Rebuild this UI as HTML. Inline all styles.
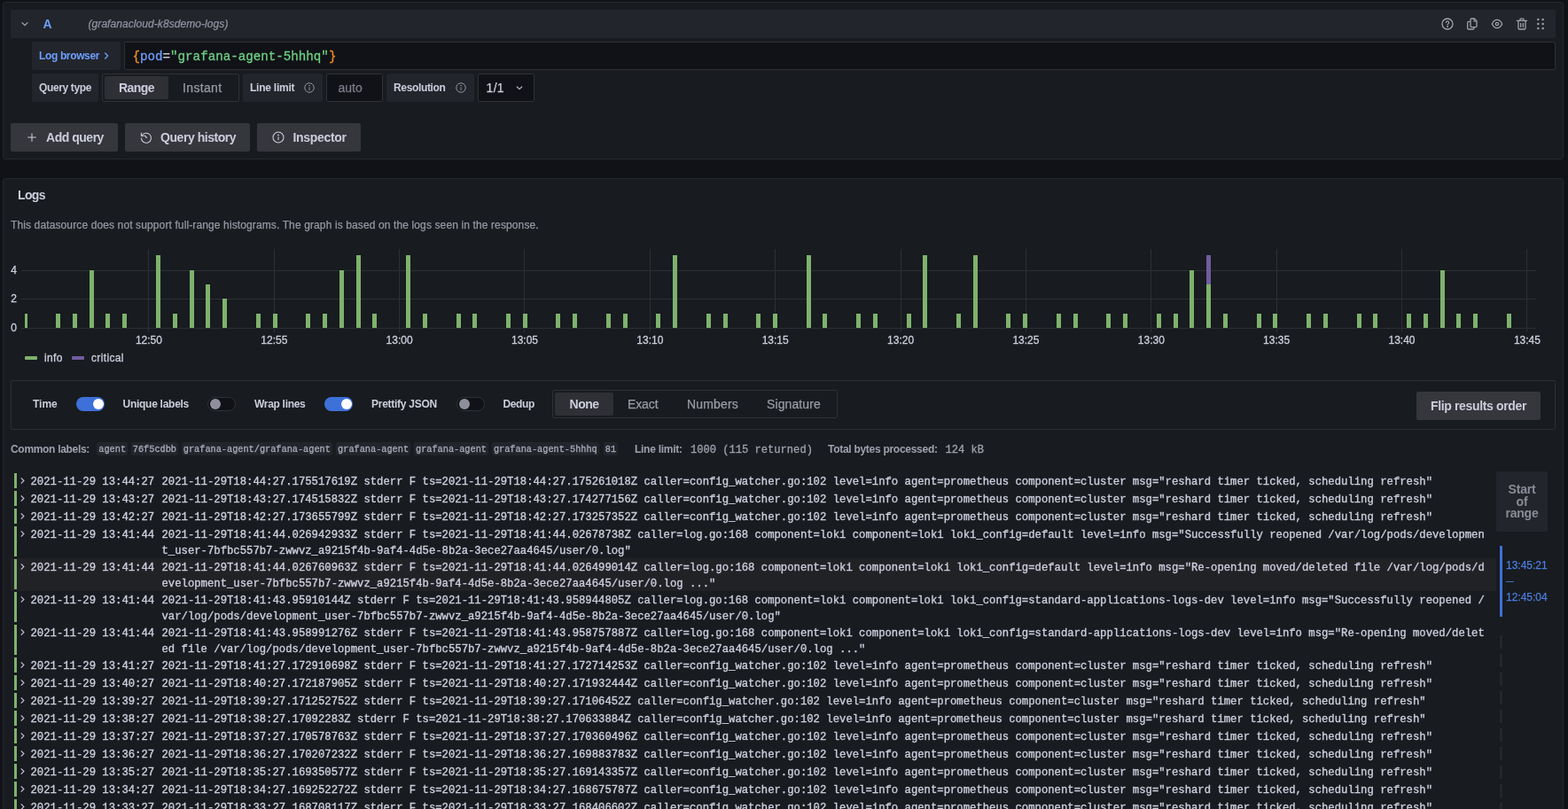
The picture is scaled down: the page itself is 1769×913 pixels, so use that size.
<!DOCTYPE html>
<html lang="en">
<head>
<meta charset="utf-8">
<title>Explore - Loki logs</title>
<style>
*{box-sizing:border-box;margin:0;padding:0}
html,body{width:1769px;height:913px;overflow:hidden;background:#111217}
body{position:relative;font-family:"Liberation Sans","DejaVu Sans",sans-serif;color:#ccccdc;font-size:14px}
.abs{position:absolute}
.panel{position:absolute;background:#181b1f;border:1px solid #25272c;border-radius:3px}
.sec{background:#22252b;border-radius:2px}
.lbl{position:absolute;height:32px;line-height:32px;background:#22252b;border-radius:2px;font-size:12px;font-weight:bold;padding-left:8px;white-space:nowrap;color:#ccccdc}
.inp{position:absolute;height:32px;background:#111217;border:1px solid #2f3137;border-radius:2px;line-height:30px;font-size:14px;white-space:nowrap}
.rg{background:#181b1f}
.btn{position:absolute;height:32px;line-height:32px;background:#35373d;border-radius:2px;font-size:14px;font-weight:bold;color:#ccccdc;white-space:nowrap}
.t{position:absolute;white-space:nowrap}
.rs{-webkit-text-stroke:0.25px}
.mono{-webkit-text-stroke:0.3px}
.mono{font-family:"Liberation Mono","DejaVu Sans Mono",monospace}
.sw{position:absolute;width:32px;height:16px;border-radius:8px;top:448px}
.sw.on{background:#3d71d9}
.sw.on i{position:absolute;right:1.500px;top:2px;width:12px;height:12px;border-radius:50%;background:#fff}
.sw.off{background:#111217;border:1px solid #2f3137}
.sw.off i{position:absolute;left:1.500px;top:1px;width:12px;height:12px;border-radius:50%;background:#8e8f9b}
.o12{position:absolute;top:449px;line-height:14px;font-size:12px;font-weight:bold;white-space:nowrap}
.ro{position:absolute;font-size:14px;white-space:nowrap;color:#9a9ba6;-webkit-text-stroke:0.25px}
.cl{position:absolute;top:499px;height:15px;line-height:15px;padding-top:1px !important;background:#22252b;border-radius:2px;font-size:10.25px;padding:0 2.3px;white-space:pre;color:#a9aab8}
.m12{position:absolute;top:498.500px;line-height:16px;font-size:12px;white-space:nowrap}
.chart text{font-family:"Liberation Sans","DejaVu Sans",sans-serif;font-size:12px;fill:#ccccdc;stroke:#ccccdc;stroke-width:.3px}
.row{position:absolute;left:12px;width:1676px;font-family:"Liberation Mono","DejaVu Sans Mono",monospace;font-size:12.25px;line-height:18px;white-space:pre;color:#ccccdc;-webkit-text-stroke:0.35px #ccccdc}
.row.hov{background:#202226}
.row .lv{position:absolute;left:4px;top:1px;width:3px;background:#7eb26d}
.row .chev{position:absolute;left:10px;top:4.500px;width:7px;height:9px}
.row .tm{position:absolute;left:22.500px;top:1.750px}
.row .msg{position:absolute;left:170.500px;top:1.750px}
</style>
</head>
<body>
<div id="root" style="position:absolute;left:0;top:0;width:1769px;height:913px;will-change:transform">

<!-- ================= Query editor panel ================= -->
<div class="panel" style="left:3px;top:2px;width:1761px;height:178px"></div>

<div class="abs sec" style="left:12px;top:11px;width:1743px;height:32px"></div>
<svg class="abs" style="left:20px;top:19px" width="16" height="16" viewBox="0 0 24 24"><path d="M7.500 10 L12 14.500 L16.500 10" fill="none" stroke="#a8a9b7" stroke-width="1.800" stroke-linecap="round" stroke-linejoin="round"/></svg>
<div class="t" style="left:48.5px;top:11px;line-height:32px;font-size:14px;font-weight:bold;color:#6e9fff;letter-spacing:-0.23px">A</div>
<div class="t rs" style="left:99.5px;top:11px;line-height:32px;font-size:12px;font-style:italic;color:#9192a0;letter-spacing:0.07px">(grafanacloud-k8sdemo-logs)</div>

<!-- header action icons -->
<svg class="abs" style="left:1625px;top:19px" width="16" height="16" viewBox="0 0 24 24" fill="none" stroke="#a2a3b1" stroke-width="1.9"><circle cx="12" cy="12" r="9"/><path d="M9.700 9.700a2.400 2.400 0 1 1 3.300 2.200c-.7.300-1 .800-1 1.500" stroke-width="1.700" stroke-linecap="round"/><circle cx="12" cy="16.600" r="0.500" fill="#a2a3b1"/></svg>
<svg class="abs" style="left:1653px;top:19px" width="16" height="16" viewBox="0 0 24 24" fill="none" stroke="#a2a3b1" stroke-width="1.9" stroke-linejoin="round"><path d="M11 3h4.500l4 4v8.500a2 2 0 0 1-2 2H11a2 2 0 0 1-2-2V5a2 2 0 0 1 2-2z"/><path d="M15 3.300V7.500h4.300" stroke-width="1.600"/><path d="M8.500 8H6a2 2 0 0 0-2 2v9a2 2 0 0 0 2 2h7a2 2 0 0 0 2-2v-1"/></svg>
<svg class="abs" style="left:1681px;top:19px" width="16" height="16" viewBox="0 0 24 24" fill="none" stroke="#a2a3b1" stroke-width="1.9"><path d="M3.500 12c2-4.600 5-6.900 8.500-6.900s6.500 2.300 8.500 6.900c-2 4.600-5 6.900-8.500 6.900s-6.500-2.300-8.500-6.900z"/><circle cx="12" cy="12" r="2.600"/></svg>
<svg class="abs" style="left:1709px;top:19px" width="16" height="16" viewBox="0 0 24 24" fill="none" stroke="#a2a3b1" stroke-width="1.9" stroke-linecap="round"><path d="M3.500 6.500h17M9 6V4.200a1 1 0 0 1 1-1h4a1 1 0 0 1 1 1V6M6 7v12a2 2 0 0 0 2 2h8a2 2 0 0 0 2-2V7M10 11v6M14 11v6"/></svg>
<svg class="abs" style="left:1730px;top:19px" width="16" height="16" viewBox="0 0 24 24" fill="#a2a3b1"><circle cx="8" cy="4.500" r="1.800"/><circle cx="16" cy="4.500" r="1.800"/><circle cx="8" cy="12" r="1.800"/><circle cx="16" cy="12" r="1.800"/><circle cx="8" cy="19.500" r="1.800"/><circle cx="16" cy="19.500" r="1.800"/></svg>

<!-- row 2 : log browser + query -->
<div class="abs sec" style="left:36px;top:47px;width:100px;height:32px"></div>
<div class="t" style="left:44px;top:47px;line-height:32px;font-size:12px;font-weight:bold;color:#6e9fff;letter-spacing:-0.36px">Log browser</div>
<svg class="abs" style="left:112px;top:55px" width="16" height="16" viewBox="0 0 24 24"><path d="M10 7.500 L14.500 12 L10 16.500" fill="none" stroke="#6e9fff" stroke-width="2" stroke-linecap="round" stroke-linejoin="round"/></svg>
<div class="inp" style="left:140px;top:47px;width:1615px"></div>
<div class="t mono" style="left:149.500px;top:48px;line-height:32px;font-size:14.200px"><span style="color:#f28b20">{</span><span style="color:#6e9fff">pod</span><span style="color:#c8c9d6">=</span><span style="color:#6ed085">"grafana-agent-5hhhq"</span><span style="color:#f28b20">}</span></div>

<!-- row 3 : options -->
<div class="lbl" style="left:36px;top:83px;width:75px;letter-spacing:-0.37px">Query type</div>
<div class="inp rg" style="left:115px;top:83px;width:155px"></div>
<div class="abs" style="left:118px;top:86px;width:72px;height:26px;background:#2e3036;border-radius:2px"></div>
<div class="t" style="left:134px;top:83px;line-height:32px;font-size:14px;font-weight:bold;color:#ccccdc;letter-spacing:-0.56px">Range</div>
<div class="t rs" style="left:206px;top:83px;line-height:32px;font-size:14px;color:#9a9ba6;letter-spacing:0.35px">Instant</div>
<div class="lbl" style="left:274px;top:83px;width:90px;letter-spacing:-0.24px">Line limit</div>
<svg class="abs" style="left:342px;top:92px" width="14" height="14" viewBox="0 0 24 24" fill="none" stroke="#9192a0" stroke-width="1.700"><circle cx="12" cy="12" r="9"/><path d="M12 11.500v5" stroke-linecap="round"/><circle cx="12" cy="8" r="0.600" fill="#9192a0"/></svg>
<div class="inp" style="left:368px;top:83px;width:64px"></div>
<div class="t rs" style="left:381.500px;top:83px;line-height:32px;font-size:14px;color:#7b7c88">auto</div>
<div class="lbl" style="left:436px;top:83px;width:99px;letter-spacing:-0.34px">Resolution</div>
<svg class="abs" style="left:513px;top:92px" width="14" height="14" viewBox="0 0 24 24" fill="none" stroke="#9192a0" stroke-width="1.700"><circle cx="12" cy="12" r="9"/><path d="M12 11.500v5" stroke-linecap="round"/><circle cx="12" cy="8" r="0.600" fill="#9192a0"/></svg>
<div class="inp" style="left:539px;top:83px;width:64px"></div>
<div class="t rs" style="left:548.500px;top:83px;line-height:32px;font-size:14px;color:#ccccdc;letter-spacing:0.34px">1/1</div>
<svg class="abs" style="left:578px;top:91px" width="16" height="16" viewBox="0 0 24 24"><path d="M8 10.500 L12 14.500 L16 10.500" fill="none" stroke="#b4b5c3" stroke-width="1.800" stroke-linecap="round" stroke-linejoin="round"/></svg>

<!-- buttons -->
<div class="btn" style="left:12px;top:139px;width:121px"></div>
<svg class="abs" style="left:28px;top:147px" width="16" height="16" viewBox="0 0 24 24"><path d="M12 5.500v13M5.500 12h13" fill="none" stroke="#ccccdc" stroke-width="1.600" stroke-linecap="round"/></svg>
<div class="t" style="left:52px;top:139px;line-height:32px;font-size:14px;font-weight:bold;letter-spacing:-0.48px">Add query</div>
<div class="btn" style="left:141px;top:139px;width:141px"></div>
<svg class="abs" style="left:157px;top:147px" width="16" height="16" viewBox="0 0 24 24" fill="none" stroke="#ccccdc" stroke-width="1.600" stroke-linecap="round" stroke-linejoin="round"><path d="M4.600 9.300A8.300 8.300 0 1 1 3.700 13"/><path d="M3.600 4.600v4.800h4.800"/><path d="M12.300 12.300L9.800 9.300" stroke-width="1.800"/><circle cx="12.300" cy="12.300" r="1" fill="#ccccdc" stroke="none"/></svg>
<div class="t" style="left:181px;top:139px;line-height:32px;font-size:14px;font-weight:bold;letter-spacing:-0.45px">Query history</div>
<div class="btn" style="left:290px;top:139px;width:117px"></div>
<svg class="abs" style="left:306px;top:147px" width="16" height="16" viewBox="0 0 24 24" fill="none" stroke="#ccccdc" stroke-width="1.600"><circle cx="12" cy="12" r="9"/><path d="M12 11.500v4.500" stroke-linecap="round"/><circle cx="12" cy="8.200" r="0.500" fill="#ccccdc"/></svg>
<div class="t" style="left:330.500px;top:139px;line-height:32px;font-size:14px;font-weight:bold;letter-spacing:-0.31px">Inspector</div>

<!-- ================= Logs panel ================= -->
<div class="panel" style="left:3px;top:201px;width:1761px;height:740px"></div>
<div class="t" style="left:20px;top:210px;line-height:20px;font-size:14px;font-weight:bold;letter-spacing:-0.66px">Logs</div>
<div class="t rs" style="left:12px;top:245px;line-height:18px;font-size:12px;color:#9697a3;letter-spacing:0.12px">This datasource does not support full-range histograms. The graph is based on the logs seen in the response.</div>

<svg class="chart" width="1769" height="420" viewBox="0 0 1769 420" style="position:absolute;left:0;top:0">
<g shape-rendering="crispEdges"><rect x="167" y="281" width="1" height="94" fill="#2c2f34"/><rect x="309" y="281" width="1" height="94" fill="#2c2f34"/><rect x="450" y="281" width="1" height="94" fill="#2c2f34"/><rect x="591" y="281" width="1" height="94" fill="#2c2f34"/><rect x="733" y="281" width="1" height="94" fill="#2c2f34"/><rect x="874" y="281" width="1" height="94" fill="#2c2f34"/><rect x="1016" y="281" width="1" height="94" fill="#2c2f34"/><rect x="1157" y="281" width="1" height="94" fill="#2c2f34"/><rect x="1298" y="281" width="1" height="94" fill="#2c2f34"/><rect x="1440" y="281" width="1" height="94" fill="#2c2f34"/><rect x="1581" y="281" width="1" height="94" fill="#2c2f34"/><rect x="1722" y="281" width="1" height="94" fill="#2c2f34"/><rect x="24" y="370" width="1709" height="1" fill="#2c2f34"/><rect x="24" y="337" width="1709" height="1" fill="#2c2f34"/><rect x="24" y="305" width="1709" height="1" fill="#2c2f34"/><rect x="28" y="354" width="3" height="16" fill="#7eb26d"/><rect x="63" y="354" width="5" height="16" fill="#7eb26d"/><rect x="82" y="354" width="5" height="16" fill="#7eb26d"/><rect x="101" y="305" width="5" height="65" fill="#7eb26d"/><rect x="119" y="354" width="5" height="16" fill="#7eb26d"/><rect x="138" y="354" width="5" height="16" fill="#7eb26d"/><rect x="176" y="288" width="5" height="82" fill="#7eb26d"/><rect x="195" y="354" width="5" height="16" fill="#7eb26d"/><rect x="214" y="305" width="5" height="65" fill="#7eb26d"/><rect x="232" y="321" width="5" height="49" fill="#7eb26d"/><rect x="251" y="337" width="5" height="33" fill="#7eb26d"/><rect x="289" y="354" width="5" height="16" fill="#7eb26d"/><rect x="308" y="354" width="5" height="16" fill="#7eb26d"/><rect x="345" y="354" width="5" height="16" fill="#7eb26d"/><rect x="364" y="354" width="5" height="16" fill="#7eb26d"/><rect x="383" y="305" width="5" height="65" fill="#7eb26d"/><rect x="402" y="288" width="5" height="82" fill="#7eb26d"/><rect x="420" y="354" width="5" height="16" fill="#7eb26d"/><rect x="458" y="288" width="5" height="82" fill="#7eb26d"/><rect x="477" y="354" width="5" height="16" fill="#7eb26d"/><rect x="515" y="354" width="5" height="16" fill="#7eb26d"/><rect x="533" y="354" width="5" height="16" fill="#7eb26d"/><rect x="571" y="354" width="5" height="16" fill="#7eb26d"/><rect x="590" y="354" width="5" height="16" fill="#7eb26d"/><rect x="627" y="354" width="5" height="16" fill="#7eb26d"/><rect x="646" y="354" width="5" height="16" fill="#7eb26d"/><rect x="684" y="354" width="5" height="16" fill="#7eb26d"/><rect x="703" y="354" width="5" height="16" fill="#7eb26d"/><rect x="740" y="354" width="5" height="16" fill="#7eb26d"/><rect x="759" y="288" width="5" height="82" fill="#7eb26d"/><rect x="797" y="354" width="5" height="16" fill="#7eb26d"/><rect x="816" y="354" width="5" height="16" fill="#7eb26d"/><rect x="853" y="354" width="5" height="16" fill="#7eb26d"/><rect x="872" y="354" width="5" height="16" fill="#7eb26d"/><rect x="910" y="288" width="5" height="82" fill="#7eb26d"/><rect x="928" y="354" width="5" height="16" fill="#7eb26d"/><rect x="966" y="354" width="5" height="16" fill="#7eb26d"/><rect x="985" y="354" width="5" height="16" fill="#7eb26d"/><rect x="1023" y="354" width="5" height="16" fill="#7eb26d"/><rect x="1041" y="288" width="5" height="82" fill="#7eb26d"/><rect x="1079" y="354" width="5" height="16" fill="#7eb26d"/><rect x="1098" y="288" width="5" height="82" fill="#7eb26d"/><rect x="1135" y="354" width="5" height="16" fill="#7eb26d"/><rect x="1154" y="354" width="5" height="16" fill="#7eb26d"/><rect x="1192" y="354" width="5" height="16" fill="#7eb26d"/><rect x="1211" y="354" width="5" height="16" fill="#7eb26d"/><rect x="1248" y="354" width="5" height="16" fill="#7eb26d"/><rect x="1267" y="354" width="5" height="16" fill="#7eb26d"/><rect x="1305" y="354" width="5" height="16" fill="#7eb26d"/><rect x="1324" y="354" width="5" height="16" fill="#7eb26d"/><rect x="1342" y="305" width="5" height="65" fill="#7eb26d"/><rect x="1361" y="321" width="5" height="49" fill="#7eb26d"/><rect x="1361" y="288" width="5" height="33" fill="#705da0"/><rect x="1380" y="354" width="5" height="16" fill="#7eb26d"/><rect x="1418" y="354" width="5" height="16" fill="#7eb26d"/><rect x="1436" y="354" width="5" height="16" fill="#7eb26d"/><rect x="1474" y="354" width="5" height="16" fill="#7eb26d"/><rect x="1493" y="354" width="5" height="16" fill="#7eb26d"/><rect x="1531" y="354" width="5" height="16" fill="#7eb26d"/><rect x="1549" y="354" width="5" height="16" fill="#7eb26d"/><rect x="1587" y="354" width="5" height="16" fill="#7eb26d"/><rect x="1606" y="354" width="5" height="16" fill="#7eb26d"/><rect x="1625" y="305" width="5" height="65" fill="#7eb26d"/><rect x="1643" y="354" width="5" height="16" fill="#7eb26d"/><rect x="1662" y="354" width="5" height="16" fill="#7eb26d"/><rect x="1700" y="354" width="5" height="16" fill="#7eb26d"/></g>
<g class="axt"><text x="167.9" y="388" text-anchor="middle">12:50</text><text x="309.3" y="388" text-anchor="middle">12:55</text><text x="450.6" y="388" text-anchor="middle">13:00</text><text x="592.0" y="388" text-anchor="middle">13:05</text><text x="733.3" y="388" text-anchor="middle">13:10</text><text x="874.7" y="388" text-anchor="middle">13:15</text><text x="1016.1" y="388" text-anchor="middle">13:20</text><text x="1157.4" y="388" text-anchor="middle">13:25</text><text x="1298.8" y="388" text-anchor="middle">13:30</text><text x="1440.1" y="388" text-anchor="middle">13:35</text><text x="1581.5" y="388" text-anchor="middle">13:40</text><text x="1722.9" y="388" text-anchor="middle">13:45</text><text x="19" y="373.5" text-anchor="end">0</text><text x="19" y="340.5" text-anchor="end">2</text><text x="19" y="308.5" text-anchor="end">4</text></g>
<rect x="28" y="402" width="14" height="4" rx="1" fill="#7eb26d"/><text class="leg" x="50" y="408" letter-spacing="0.35">info</text>
<rect x="81" y="402" width="14" height="4" rx="1" fill="#705da0"/><text class="leg" x="103" y="408" letter-spacing="0.35">critical</text>
</svg>

<!-- log options box -->
<div class="abs" style="left:12px;top:429px;width:1743px;height:56px;border:1px solid #2d2f35;border-radius:2px"></div>
<div class="o12" style="left:37px;letter-spacing:-0.02px">Time</div>
<div class="sw on" style="left:86px"><i></i></div>
<div class="o12" style="left:138.500px;letter-spacing:-0.27px">Unique labels</div>
<div class="sw off" style="left:234px"><i></i></div>
<div class="o12" style="left:287px;letter-spacing:-0.30px">Wrap lines</div>
<div class="sw on" style="left:366px"><i></i></div>
<div class="o12" style="left:419px;letter-spacing:-0.26px">Prettify JSON</div>
<div class="sw off" style="left:515px"><i></i></div>
<div class="o12" style="left:567.500px;letter-spacing:-0.39px">Dedup</div>
<div class="inp rg" style="left:623px;top:440px;width:322px"></div>
<div class="abs" style="left:626px;top:443px;width:66px;height:26px;background:#2e3036;border-radius:2px"></div>
<div class="t" style="left:642.500px;top:440px;line-height:32px;font-size:14px;font-weight:bold;color:#ccccdc;letter-spacing:-0.47px">None</div>
<div class="ro" style="left:708px;top:440px;line-height:32px;letter-spacing:-0.12px">Exact</div>
<div class="ro" style="left:775px;top:440px;line-height:32px;letter-spacing:0.17px">Numbers</div>
<div class="ro" style="left:865px;top:440px;line-height:32px;letter-spacing:0.10px">Signature</div>
<div class="btn" style="left:1598px;top:442px;width:140px"></div>
<div class="t" style="left:1614px;top:442px;line-height:32px;font-size:14px;font-weight:bold;letter-spacing:-0.35px">Flip results order</div>

<!-- meta row -->
<div class="m12" style="left:12px;font-weight:bold;color:#9fa0ad;letter-spacing:-0.31px">Common labels:</div>
<div class="cl mono" style="left:109px">agent</div>
<div class="cl mono" style="left:147.500px">76f5cdbb</div>
<div class="cl mono" style="left:204.500px">grafana-agent/grafana-agent</div>
<div class="cl mono" style="left:378.800px">grafana-agent</div>
<div class="cl mono" style="left:466.700px">grafana-agent</div>
<div class="cl mono" style="left:554.600px">grafana-agent-5hhhq</div>
<div class="cl mono" style="left:680.500px">81</div>
<div class="m12" style="left:716px;font-weight:bold;color:#9fa0ad;letter-spacing:-0.27px">Line limit:</div>
<div class="m12 mono" style="top:499.500px;left:779px;color:#9fa0ad;font-size:12.100px">1000 (115 returned)</div>
<div class="m12" style="left:934px;font-weight:bold;color:#9fa0ad;letter-spacing:-0.28px">Total bytes processed:</div>
<div class="m12 mono" style="top:499.500px;left:1066.500px;color:#9fa0ad;font-size:12.100px">124 kB</div>

<!-- log rows -->
<div class="row" style="top:533px;height:20px"><i class="lv" style="height:17px"></i><svg class="chev" viewBox="0 0 8 10"><path d="M2 1.5 L5.6 5 L2 8.5" fill="none" stroke="#c4c5d3" stroke-width="1.3"/></svg><span class="tm">2021-11-29 13:44:27</span><span class="msg">2021-11-29T18:44:27.175517619Z stderr F ts=2021-11-29T18:44:27.175261018Z caller=config_watcher.go:102 level=info agent=prometheus component=cluster msg=&quot;reshard timer ticked, scheduling refresh&quot;</span></div>
<div class="row" style="top:553px;height:20px"><i class="lv" style="height:17px"></i><svg class="chev" viewBox="0 0 8 10"><path d="M2 1.5 L5.6 5 L2 8.5" fill="none" stroke="#c4c5d3" stroke-width="1.3"/></svg><span class="tm">2021-11-29 13:43:27</span><span class="msg">2021-11-29T18:43:27.174515832Z stderr F ts=2021-11-29T18:43:27.174277156Z caller=config_watcher.go:102 level=info agent=prometheus component=cluster msg=&quot;reshard timer ticked, scheduling refresh&quot;</span></div>
<div class="row" style="top:573px;height:20px"><i class="lv" style="height:17px"></i><svg class="chev" viewBox="0 0 8 10"><path d="M2 1.5 L5.6 5 L2 8.5" fill="none" stroke="#c4c5d3" stroke-width="1.3"/></svg><span class="tm">2021-11-29 13:42:27</span><span class="msg">2021-11-29T18:42:27.173655799Z stderr F ts=2021-11-29T18:42:27.173257352Z caller=config_watcher.go:102 level=info agent=prometheus component=cluster msg=&quot;reshard timer ticked, scheduling refresh&quot;</span></div>
<div class="row" style="top:593px;height:37px"><i class="lv" style="height:34px"></i><svg class="chev" viewBox="0 0 8 10"><path d="M2 1.5 L5.6 5 L2 8.5" fill="none" stroke="#c4c5d3" stroke-width="1.3"/></svg><span class="tm">2021-11-29 13:41:44</span><span class="msg">2021-11-29T18:41:44.026942933Z stderr F ts=2021-11-29T18:41:44.02678738Z caller=log.go:168 component=loki component=loki loki_config=default level=info msg=&quot;Successfully reopened /var/log/pods/developmen<br>t_user-7bfbc557b7-zwwvz_a9215f4b-9af4-4d5e-8b2a-3ece27aa4645/user/0.log&quot;</span></div>
<div class="row hov" style="top:630px;height:37px"><i class="lv" style="height:34px"></i><svg class="chev" viewBox="0 0 8 10"><path d="M2 1.5 L5.6 5 L2 8.5" fill="none" stroke="#c4c5d3" stroke-width="1.3"/></svg><span class="tm">2021-11-29 13:41:44</span><span class="msg">2021-11-29T18:41:44.026760963Z stderr F ts=2021-11-29T18:41:44.026499014Z caller=log.go:168 component=loki component=loki loki_config=default level=info msg=&quot;Re-opening moved/deleted file /var/log/pods/d<br>evelopment_user-7bfbc557b7-zwwvz_a9215f4b-9af4-4d5e-8b2a-3ece27aa4645/user/0.log ...&quot;</span></div>
<div class="row" style="top:667px;height:37px"><i class="lv" style="height:34px"></i><svg class="chev" viewBox="0 0 8 10"><path d="M2 1.5 L5.6 5 L2 8.5" fill="none" stroke="#c4c5d3" stroke-width="1.3"/></svg><span class="tm">2021-11-29 13:41:44</span><span class="msg">2021-11-29T18:41:43.95910144Z stderr F ts=2021-11-29T18:41:43.958944805Z caller=log.go:168 component=loki component=loki loki_config=standard-applications-logs-dev level=info msg=&quot;Successfully reopened /<br>var/log/pods/development_user-7bfbc557b7-zwwvz_a9215f4b-9af4-4d5e-8b2a-3ece27aa4645/user/0.log&quot;</span></div>
<div class="row" style="top:704px;height:37px"><i class="lv" style="height:34px"></i><svg class="chev" viewBox="0 0 8 10"><path d="M2 1.5 L5.6 5 L2 8.5" fill="none" stroke="#c4c5d3" stroke-width="1.3"/></svg><span class="tm">2021-11-29 13:41:44</span><span class="msg">2021-11-29T18:41:43.958991276Z stderr F ts=2021-11-29T18:41:43.958757887Z caller=log.go:168 component=loki component=loki loki_config=standard-applications-logs-dev level=info msg=&quot;Re-opening moved/delet<br>ed file /var/log/pods/development_user-7bfbc557b7-zwwvz_a9215f4b-9af4-4d5e-8b2a-3ece27aa4645/user/0.log ...&quot;</span></div>
<div class="row" style="top:741px;height:20px"><i class="lv" style="height:17px"></i><svg class="chev" viewBox="0 0 8 10"><path d="M2 1.5 L5.6 5 L2 8.5" fill="none" stroke="#c4c5d3" stroke-width="1.3"/></svg><span class="tm">2021-11-29 13:41:27</span><span class="msg">2021-11-29T18:41:27.172910698Z stderr F ts=2021-11-29T18:41:27.172714253Z caller=config_watcher.go:102 level=info agent=prometheus component=cluster msg=&quot;reshard timer ticked, scheduling refresh&quot;</span></div>
<div class="row" style="top:761px;height:20px"><i class="lv" style="height:17px"></i><svg class="chev" viewBox="0 0 8 10"><path d="M2 1.5 L5.6 5 L2 8.5" fill="none" stroke="#c4c5d3" stroke-width="1.3"/></svg><span class="tm">2021-11-29 13:40:27</span><span class="msg">2021-11-29T18:40:27.172187905Z stderr F ts=2021-11-29T18:40:27.171932444Z caller=config_watcher.go:102 level=info agent=prometheus component=cluster msg=&quot;reshard timer ticked, scheduling refresh&quot;</span></div>
<div class="row" style="top:781px;height:20px"><i class="lv" style="height:17px"></i><svg class="chev" viewBox="0 0 8 10"><path d="M2 1.5 L5.6 5 L2 8.5" fill="none" stroke="#c4c5d3" stroke-width="1.3"/></svg><span class="tm">2021-11-29 13:39:27</span><span class="msg">2021-11-29T18:39:27.171252752Z stderr F ts=2021-11-29T18:39:27.17106452Z caller=config_watcher.go:102 level=info agent=prometheus component=cluster msg=&quot;reshard timer ticked, scheduling refresh&quot;</span></div>
<div class="row" style="top:801px;height:20px"><i class="lv" style="height:17px"></i><svg class="chev" viewBox="0 0 8 10"><path d="M2 1.5 L5.6 5 L2 8.5" fill="none" stroke="#c4c5d3" stroke-width="1.3"/></svg><span class="tm">2021-11-29 13:38:27</span><span class="msg">2021-11-29T18:38:27.17092283Z stderr F ts=2021-11-29T18:38:27.170633884Z caller=config_watcher.go:102 level=info agent=prometheus component=cluster msg=&quot;reshard timer ticked, scheduling refresh&quot;</span></div>
<div class="row" style="top:821px;height:20px"><i class="lv" style="height:17px"></i><svg class="chev" viewBox="0 0 8 10"><path d="M2 1.5 L5.6 5 L2 8.5" fill="none" stroke="#c4c5d3" stroke-width="1.3"/></svg><span class="tm">2021-11-29 13:37:27</span><span class="msg">2021-11-29T18:37:27.170578763Z stderr F ts=2021-11-29T18:37:27.170360496Z caller=config_watcher.go:102 level=info agent=prometheus component=cluster msg=&quot;reshard timer ticked, scheduling refresh&quot;</span></div>
<div class="row" style="top:841px;height:20px"><i class="lv" style="height:17px"></i><svg class="chev" viewBox="0 0 8 10"><path d="M2 1.5 L5.6 5 L2 8.5" fill="none" stroke="#c4c5d3" stroke-width="1.3"/></svg><span class="tm">2021-11-29 13:36:27</span><span class="msg">2021-11-29T18:36:27.170207232Z stderr F ts=2021-11-29T18:36:27.169883783Z caller=config_watcher.go:102 level=info agent=prometheus component=cluster msg=&quot;reshard timer ticked, scheduling refresh&quot;</span></div>
<div class="row" style="top:861px;height:20px"><i class="lv" style="height:17px"></i><svg class="chev" viewBox="0 0 8 10"><path d="M2 1.5 L5.6 5 L2 8.5" fill="none" stroke="#c4c5d3" stroke-width="1.3"/></svg><span class="tm">2021-11-29 13:35:27</span><span class="msg">2021-11-29T18:35:27.169350577Z stderr F ts=2021-11-29T18:35:27.169143357Z caller=config_watcher.go:102 level=info agent=prometheus component=cluster msg=&quot;reshard timer ticked, scheduling refresh&quot;</span></div>
<div class="row" style="top:881px;height:20px"><i class="lv" style="height:17px"></i><svg class="chev" viewBox="0 0 8 10"><path d="M2 1.5 L5.6 5 L2 8.5" fill="none" stroke="#c4c5d3" stroke-width="1.3"/></svg><span class="tm">2021-11-29 13:34:27</span><span class="msg">2021-11-29T18:34:27.169252272Z stderr F ts=2021-11-29T18:34:27.168675787Z caller=config_watcher.go:102 level=info agent=prometheus component=cluster msg=&quot;reshard timer ticked, scheduling refresh&quot;</span></div>
<div class="row" style="top:901px;height:20px"><i class="lv" style="height:17px"></i><svg class="chev" viewBox="0 0 8 10"><path d="M2 1.5 L5.6 5 L2 8.5" fill="none" stroke="#c4c5d3" stroke-width="1.3"/></svg><span class="tm">2021-11-29 13:33:27</span><span class="msg">2021-11-29T18:33:27.168708117Z stderr F ts=2021-11-29T18:33:27.168406602Z caller=config_watcher.go:102 level=info agent=prometheus component=cluster msg=&quot;reshard timer ticked, scheduling refresh&quot;</span></div>

<!-- log navigation -->
<div class="abs sec" style="left:1688px;top:532px;width:58px;height:68px"></div>
<div class="t" style="left:1688px;top:546px;width:58px;text-align:center;line-height:13.700px;font-size:14px;letter-spacing:-0.200px;font-weight:bold;color:#8a8b98;white-space:normal">Start<br>of<br>range</div>
<div class="abs" style="left:1692px;top:616px;width:3px;height:80px;background:#3d71d9"></div>
<div class="t rs" style="left:1699px;top:629px;line-height:18px;font-size:12px;color:#4b7ee0">13:45:21<br><span style="font-size:8.500px;vertical-align:1px">—</span><br>12:45:04</div>
<svg class="abs" style="left:1692px;top:717px" width="4" height="200"><path d="M1.500 0V200" stroke="#23262b" stroke-width="3" stroke-dasharray="15 6"/></svg>

</div>
</body>
</html>
